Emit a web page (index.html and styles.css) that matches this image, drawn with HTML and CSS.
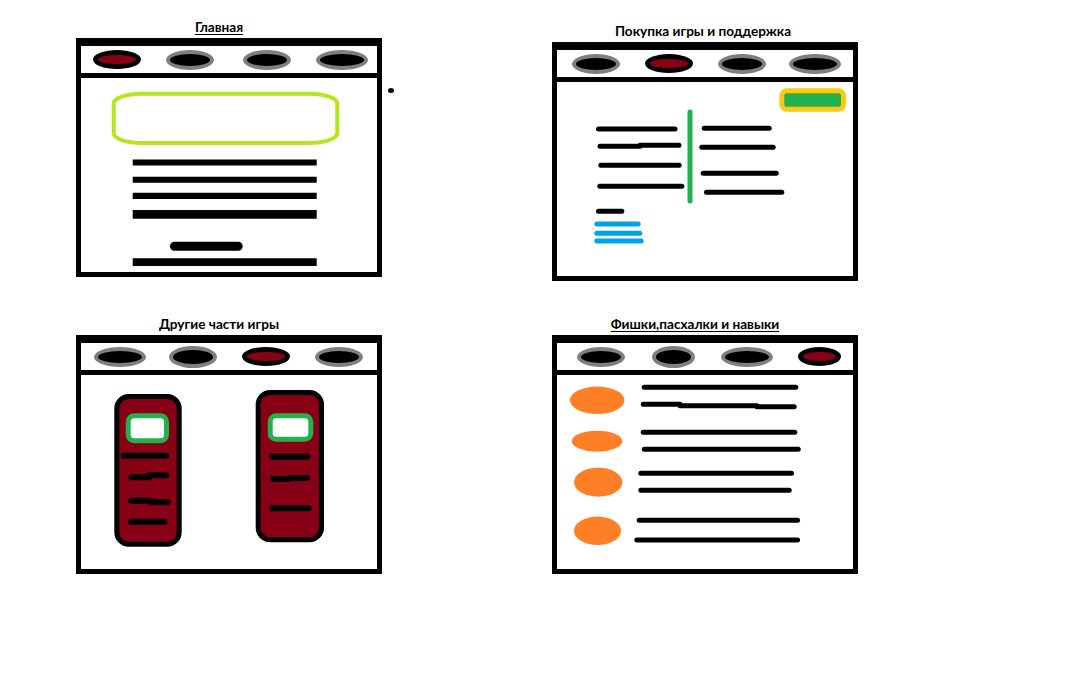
FILE: index.html
```html
<!DOCTYPE html>
<html lang="ru">
<head>
    <meta charset="UTF-8">
    <title>Макет сайта игры</title>
    <link rel="stylesheet" href="styles.css">
</head>
<body>
    <div class="board">
        <!-- Главная -->
        <section class="sketch home">
            <h2 class="sketch-title underlined">Главная</h2>
            <div class="window">
                <div class="tabs">
                    <span class="tab active"></span>
                    <span class="tab"></span>
                    <span class="tab"></span>
                    <span class="tab wide"></span>
                </div>
                <svg class="window-body" viewBox="0 0 296 194">
                    <rect class="hero-frame" x="32.7" y="15.7" width="223.6" height="49.3" rx="28" ry="10"/>
                    <g class="ink flat">
                        <line x1="51.7" y1="84.5" x2="235.7" y2="84.5" stroke-width="6"/>
                        <line x1="51.7" y1="101.7" x2="235.7" y2="101.7" stroke-width="6"/>
                        <line x1="51.7" y1="117.8" x2="235.7" y2="117.8" stroke-width="6.3"/>
                        <line x1="51.7" y1="136.3" x2="235.7" y2="136.3" stroke-width="8.7"/>
                        <line x1="51.7" y1="184.2" x2="235.7" y2="184.2" stroke-width="7.7"/>
                    </g>
                    <line class="ink" x1="93.5" y1="168.2" x2="157.2" y2="168.2" stroke-width="9"/>
                </svg>
            </div>
            <span class="stray-dot"></span>
        </section>

        <!-- Покупка игры и поддержка -->
        <section class="sketch buy">
            <h2 class="sketch-title">Покупка игры и поддержка</h2>
            <div class="window">
                <div class="tabs">
                    <span class="tab"></span>
                    <span class="tab active"></span>
                    <span class="tab"></span>
                    <span class="tab wide"></span>
                </div>
                <svg class="window-body" viewBox="0 0 296 194">
                    <rect class="buy-button" x="224.8" y="8.8" width="61.7" height="18.4" rx="5"/>
                    <line class="green-rule" x1="133" y1="30" x2="133" y2="119"/>
                    <g class="ink" stroke-width="5">
                        <line x1="41.5" y1="47" x2="118" y2="47"/>
                        <path d="M43 64.3 H83 M83 63.3 H122"/>
                        <line x1="43.8" y1="83.3" x2="122.2" y2="83.3"/>
                        <line x1="42.8" y1="104.3" x2="124.8" y2="104.3"/>
                        <line x1="41.5" y1="129.3" x2="64.8" y2="129.3"/>

                        <line x1="147.2" y1="46.3" x2="212.2" y2="46.3"/>
                        <line x1="144.8" y1="65.3" x2="216.2" y2="65.3"/>
                        <line x1="146.2" y1="91.3" x2="219.2" y2="91.3"/>
                        <line x1="149.5" y1="110.3" x2="224.8" y2="110.3"/>
                    </g>
                    <g class="ink blue" stroke-width="5">
                        <line x1="39.8" y1="142" x2="81.2" y2="142"/>
                        <line x1="39.8" y1="151.3" x2="82.8" y2="151.3"/>
                        <line x1="39.8" y1="159" x2="84.2" y2="159"/>
                    </g>
                </svg>
            </div>
        </section>

        <!-- Другие части игры -->
        <section class="sketch">
            <h2 class="sketch-title">Другие части игры</h2>
            <div class="window">
                <div class="tabs">
                    <span class="tab wide"></span>
                    <span class="tab tall"></span>
                    <span class="tab active"></span>
                    <span class="tab"></span>
                </div>
                <svg class="window-body" viewBox="0 0 296 194">
                    <rect class="game-card" x="35.8" y="21.5" width="62.4" height="147.7" rx="12"/>
                    <rect class="game-cover" x="47.2" y="40.8" width="38.3" height="25" rx="6"/>
                    <rect class="game-card" x="177.2" y="17.5" width="63.3" height="147.3" rx="12"/>
                    <rect class="game-cover" x="189.2" y="40.8" width="40.6" height="23.4" rx="6"/>
                    <g class="ink" stroke-width="6">
                        <line x1="42.7" y1="80.7" x2="85.3" y2="80.7"/>
                        <path d="M50.3 102.3 H68 M68 100.3 H85.3"/>
                        <path d="M50.3 125.7 H70 M70 127.3 H86.7"/>
                        <line x1="50.3" y1="146.7" x2="83.3" y2="146.7"/>

                        <line x1="191.3" y1="81.7" x2="226" y2="81.7"/>
                        <path d="M192 104 H208 M208 103 H226"/>
                        <line x1="191.3" y1="133.3" x2="227.7" y2="133.3"/>
                    </g>
                </svg>
            </div>
        </section>

        <!-- Фишки, пасхалки и навыки -->
        <section class="sketch skills">
            <h2 class="sketch-title underlined">Фишки,пасхалки и навыки</h2>
            <div class="window">
                <div class="tabs">
                    <span class="tab"></span>
                    <span class="tab narrow tall"></span>
                    <span class="tab wide"></span>
                    <span class="tab active narrow"></span>
                </div>
                <svg class="window-body" viewBox="0 0 296 194">
                    <g class="skill-icon">
                        <ellipse cx="40.2" cy="25.3" rx="27.2" ry="13.7"/>
                        <ellipse cx="40" cy="66.2" rx="25.3" ry="10.5"/>
                        <ellipse cx="41.2" cy="107.2" rx="24.2" ry="14.5"/>
                        <ellipse cx="40.5" cy="155.8" rx="23.5" ry="14.2"/>
                    </g>
                    <g class="ink" stroke-width="5">
                        <line x1="87.2" y1="12.3" x2="238.8" y2="12.3"/>
                        <path d="M86.2 29.3 H123 M123 30.7 H200 M200 31.7 H237.2"/>
                        <line x1="86.2" y1="57.3" x2="237.8" y2="57.3"/>
                        <line x1="87.2" y1="74.3" x2="241.2" y2="74.3"/>
                        <line x1="83.8" y1="98.3" x2="234.5" y2="98.3"/>
                        <line x1="83.8" y1="115.3" x2="232.2" y2="115.3"/>
                        <line x1="82.2" y1="145.3" x2="240.5" y2="145.3"/>
                        <line x1="79.8" y1="165" x2="240.5" y2="165"/>
                    </g>
                </svg>
            </div>
        </section>
    </div>
</body>
</html>
```

FILE: styles.css
```css
* {
    box-sizing: border-box;
}

body {
    margin: 0;
    background: #fff;
    font-family: Lato, 'Liberation Sans', sans-serif;
    color: #000;
}

.board {
    display: grid;
    grid-template-columns: 306px 306px;
    column-gap: 170px;
    row-gap: 35px;
    align-items: start;
    padding: 19px 0 0 76px;
}

.sketch {
    position: relative;
}

.sketch.buy {
    margin-top: 4px;
}

.sketch-title {
    margin: 0 0 3px;
    padding-right: 20px;
    font-size: 13.6px;
    line-height: 16px;
    font-weight: 700;
    text-align: center;
}

.sketch.buy .sketch-title {
    padding-right: 4px;
}

.sketch-title.underlined {
    text-decoration: underline;
    text-underline-offset: 2px;
}

.window {
    width: 306px;
    height: 239px;
    border: 5px solid #000;
    border-top-width: 8px;
    display: flex;
    flex-direction: column;
    background: #fff;
}

.tabs {
    flex-shrink: 0;
    height: 32px;
    border-bottom: 5px solid #000;
    display: grid;
    grid-template-columns: repeat(4, 73px);
    padding-left: 2px;
    align-items: center;
    justify-items: center;
}

.home .tabs {
    grid-template-columns: 68px 78px 76px 73px;
}

.skills .tabs {
    padding-left: 7px;
}

.tab {
    width: 48px;
    height: 20px;
    border-radius: 50%;
    background: #000;
    border: 4px solid #7f7f7f;
}

.tab.wide {
    width: 52px;
}

.tab.narrow {
    width: 43px;
}

.tab.tall {
    height: 22px;
}

.tab.active {
    background: #880015;
    border: 5px solid #000;
    height: 19px;
}

.window-body {
    display: block;
    width: 296px;
    height: 194px;
}

/* sketch strokes */
.ink {
    stroke: #000;
    stroke-linecap: round;
    fill: none;
}

.ink.flat {
    stroke-linecap: butt;
}

.ink.blue {
    stroke: #00a2e8;
}

.hero-frame {
    fill: none;
    stroke: #b5e61d;
    stroke-width: 4;
}

.buy-button {
    fill: #22b14c;
    stroke: #ffc90e;
    stroke-width: 5;
}

.green-rule {
    stroke: #22b14c;
    stroke-width: 5;
    stroke-linecap: round;
}

.game-card {
    fill: #880015;
    stroke: #000;
    stroke-width: 5;
}

.game-cover {
    fill: #fff;
    stroke: #22b14c;
    stroke-width: 5;
}

.skill-icon {
    fill: #ff7f27;
}

.stray-dot {
    position: absolute;
    left: 312px;
    top: 69px;
    width: 6px;
    height: 5px;
    border-radius: 50%;
    background: #000;
}
```
